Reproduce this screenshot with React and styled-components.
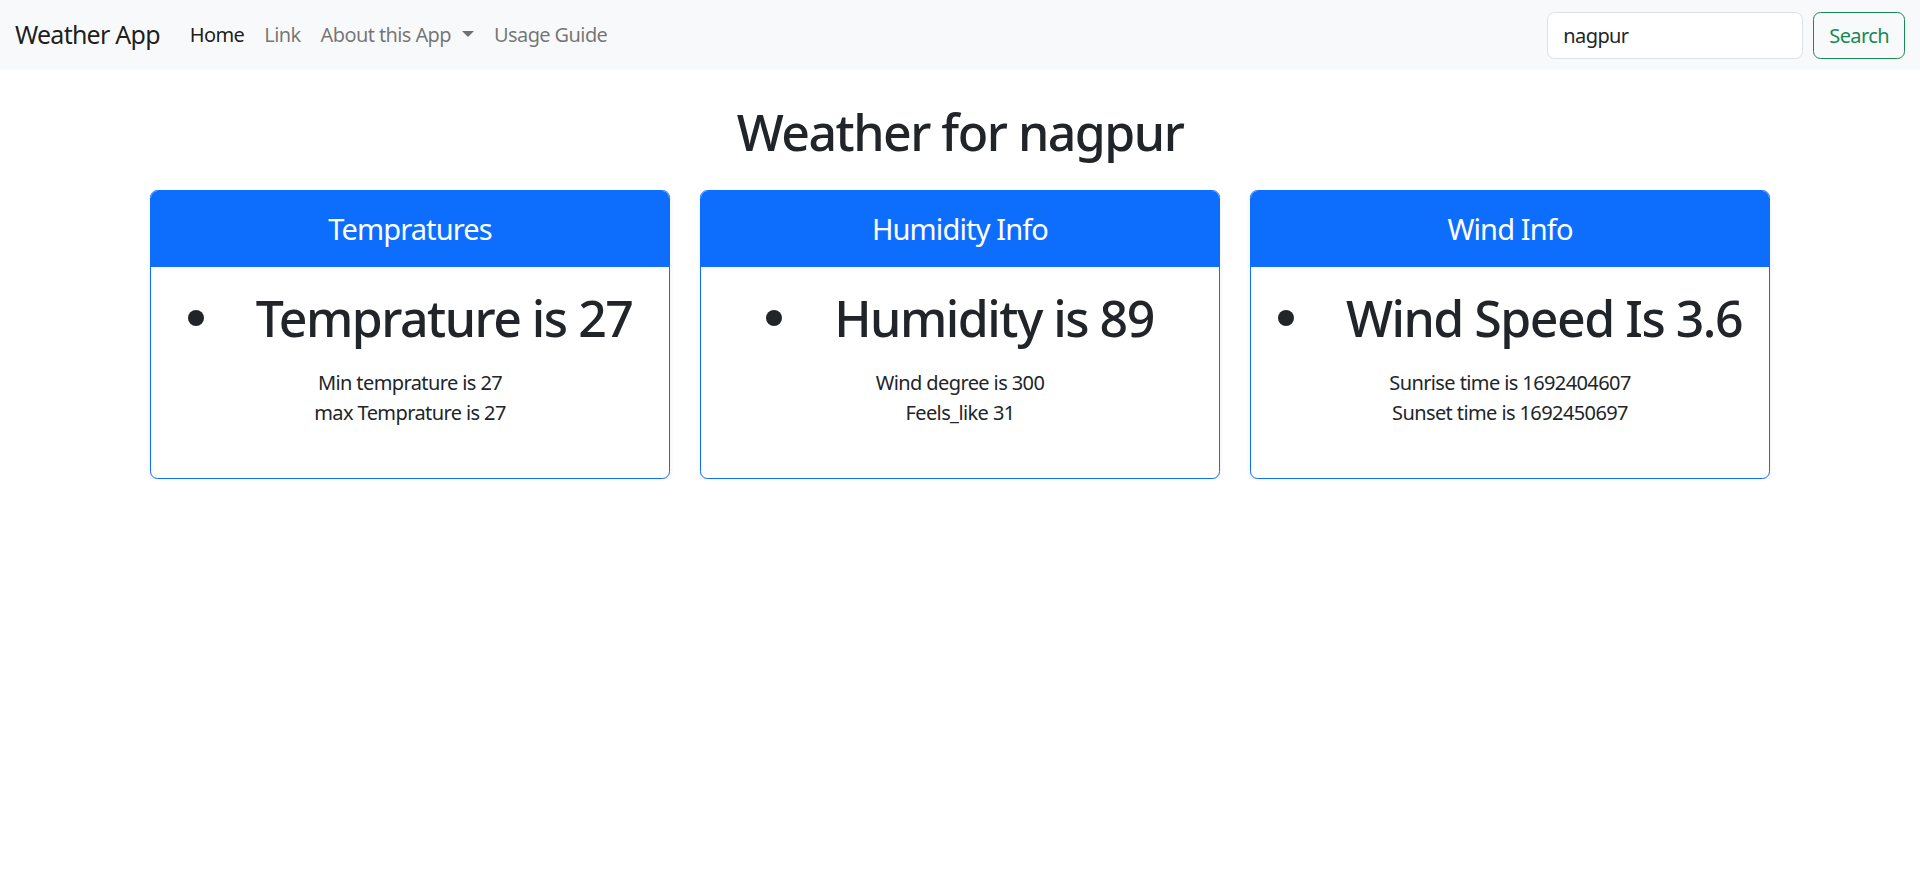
import React, { useState } from "react";
import styled, { createGlobalStyle } from "styled-components";

const FONT = `"Segoe UI", "Noto Sans", "Open Sans", "Liberation Sans", sans-serif`;

const GlobalStyle = createGlobalStyle`
  * {
    box-sizing: border-box;
    letter-spacing: -0.03em;
  }
  body {
    margin: 0;
    background: #fff;
    color: #212529;
    font-family: ${FONT};
    font-size: 20px;
    line-height: 1.5;
  }
`;

const cards = [
  {
    title: "Tempratures",
    main: "Temprature is 27",
    lines: ["Min temprature is 27", "max Temprature is 27"],
  },
  {
    title: "Humidity Info",
    main: "Humidity is 89",
    lines: ["Wind degree is 300", "Feels_like 31"],
  },
  {
    title: "Wind Info",
    main: "Wind Speed Is 3.6",
    lines: ["Sunrise time is 1692404607", "Sunset time is 1692450697"],
  },
];

const App = () => {
  const [city, setCity] = useState("nagpur");

  return (
    <>
      <GlobalStyle />
      <NavBar>
        <Brand href="#">Weather App</Brand>
        <NavLinks>
          <NavItem>
            <NavLink href="#" active>
              Home
            </NavLink>
          </NavItem>
          <NavItem>
            <NavLink href="#">Link</NavLink>
          </NavItem>
          <NavItem>
            <NavLink href="#" dropdown>
              About this App
            </NavLink>
          </NavItem>
          <NavItem>
            <NavLink href="#">Usage Guide</NavLink>
          </NavItem>
        </NavLinks>
        <SearchForm onSubmit={(e) => e.preventDefault()}>
          <SearchInput
            type="search"
            value={city}
            onChange={(e) => setCity(e.target.value)}
          />
          <SearchButton type="submit">Search</SearchButton>
        </SearchForm>
      </NavBar>

      <Container>
        <Title>Weather for nagpur</Title>
        <CardRow>
          {cards.map((card) => (
            <Card key={card.title}>
              <CardHeader>{card.title}</CardHeader>
              <CardBody>
                <MainList>
                  <MainItem>{card.main}</MainItem>
                </MainList>
                <Detail>
                  {card.lines.map((line) => (
                    <span key={line}>{line}</span>
                  ))}
                </Detail>
              </CardBody>
            </Card>
          ))}
        </CardRow>
      </Container>
    </>
  );
};

export default App;

const NavBar = styled.nav`
  display: flex;
  align-items: center;
  height: 70px;
  padding: 0 15px;
  background: #f8f9fa;
`;

const Brand = styled.a`
  font-size: 25px;
  color: rgba(0, 0, 0, 0.9);
  text-decoration: none;
  margin-right: 20px;
  white-space: nowrap;
`;

const NavLinks = styled.ul`
  list-style: none;
  display: flex;
  align-items: center;
  margin: 0;
  padding: 0;
`;

const NavItem = styled.li`
  display: block;
`;

const NavLink = styled.a`
  display: block;
  padding: 10px;
  font-size: 20px;
  text-decoration: none;
  color: ${({ active }) => (active ? "rgba(0, 0, 0, 0.9)" : "rgba(0, 0, 0, 0.55)")};

  &::after {
    content: ${({ dropdown }) => (dropdown ? '""' : "none")};
    display: inline-block;
    margin-left: 11px;
    vertical-align: 0.255em;
    border-top: 0.3em solid;
    border-right: 0.3em solid transparent;
    border-left: 0.3em solid transparent;
  }
`;

const SearchForm = styled.form`
  display: flex;
  align-items: center;
  gap: 10px;
  margin-left: auto;
`;

const SearchInput = styled.input`
  width: 256px;
  height: 47px;
  padding: 7px 15px;
  font-family: ${FONT};
  font-size: 20px;
  color: #212529;
  background: #fff;
  border: 1px solid #dee2e6;
  border-radius: 7.5px;
  outline: none;
  -webkit-appearance: none;
`;

const SearchButton = styled.button`
  height: 47px;
  padding: 7px 15px;
  font-family: ${FONT};
  font-size: 20px;
  color: #198754;
  background: transparent;
  border: 1px solid #198754;
  border-radius: 7.5px;
  cursor: pointer;
`;

const Container = styled.main`
  max-width: 1650px;
  margin: 0 auto;
  padding: 0 15px;
`;

const Title = styled.h1`
  margin: 32px 0 28px;
  text-align: center;
  font-size: 50px;
  font-weight: 500;
  line-height: 1.2;
  color: #212529;
`;

const CardRow = styled.div`
  display: grid;
  grid-template-columns: repeat(3, 1fr);
  gap: 30px;
`;

const Card = styled.section`
  border: 1px solid #0d6efd;
  border-radius: 7.5px;
  overflow: hidden;
  background: #fff;
  box-shadow: 0 2.5px 5px rgba(0, 0, 0, 0.075);
`;

const CardHeader = styled.h3`
  margin: 0;
  height: 76px;
  display: flex;
  align-items: center;
  justify-content: center;
  background: #0d6efd;
  color: #fff;
  font-size: 29px;
  font-weight: 400;
`;

const CardBody = styled.div`
  padding: 21px 20px 50px;
  text-align: center;
`;

const MainList = styled.ul`
  list-style: none;
  margin: 0 0 20px;
  padding: 0;
`;

const MainItem = styled.li`
  display: flex;
  align-items: center;
  justify-content: center;
  font-size: 50px;
  font-weight: 500;
  line-height: 60px;
  white-space: nowrap;

  &::before {
    content: "";
    width: 16px;
    height: 16px;
    margin-right: 52px;
    border-radius: 50%;
    background: #212529;
    flex-shrink: 0;
  }
`;

const Detail = styled.p`
  display: flex;
  flex-direction: column;
  align-items: center;
  margin: 0;
  font-size: 20px;
  line-height: 30px;
`;
